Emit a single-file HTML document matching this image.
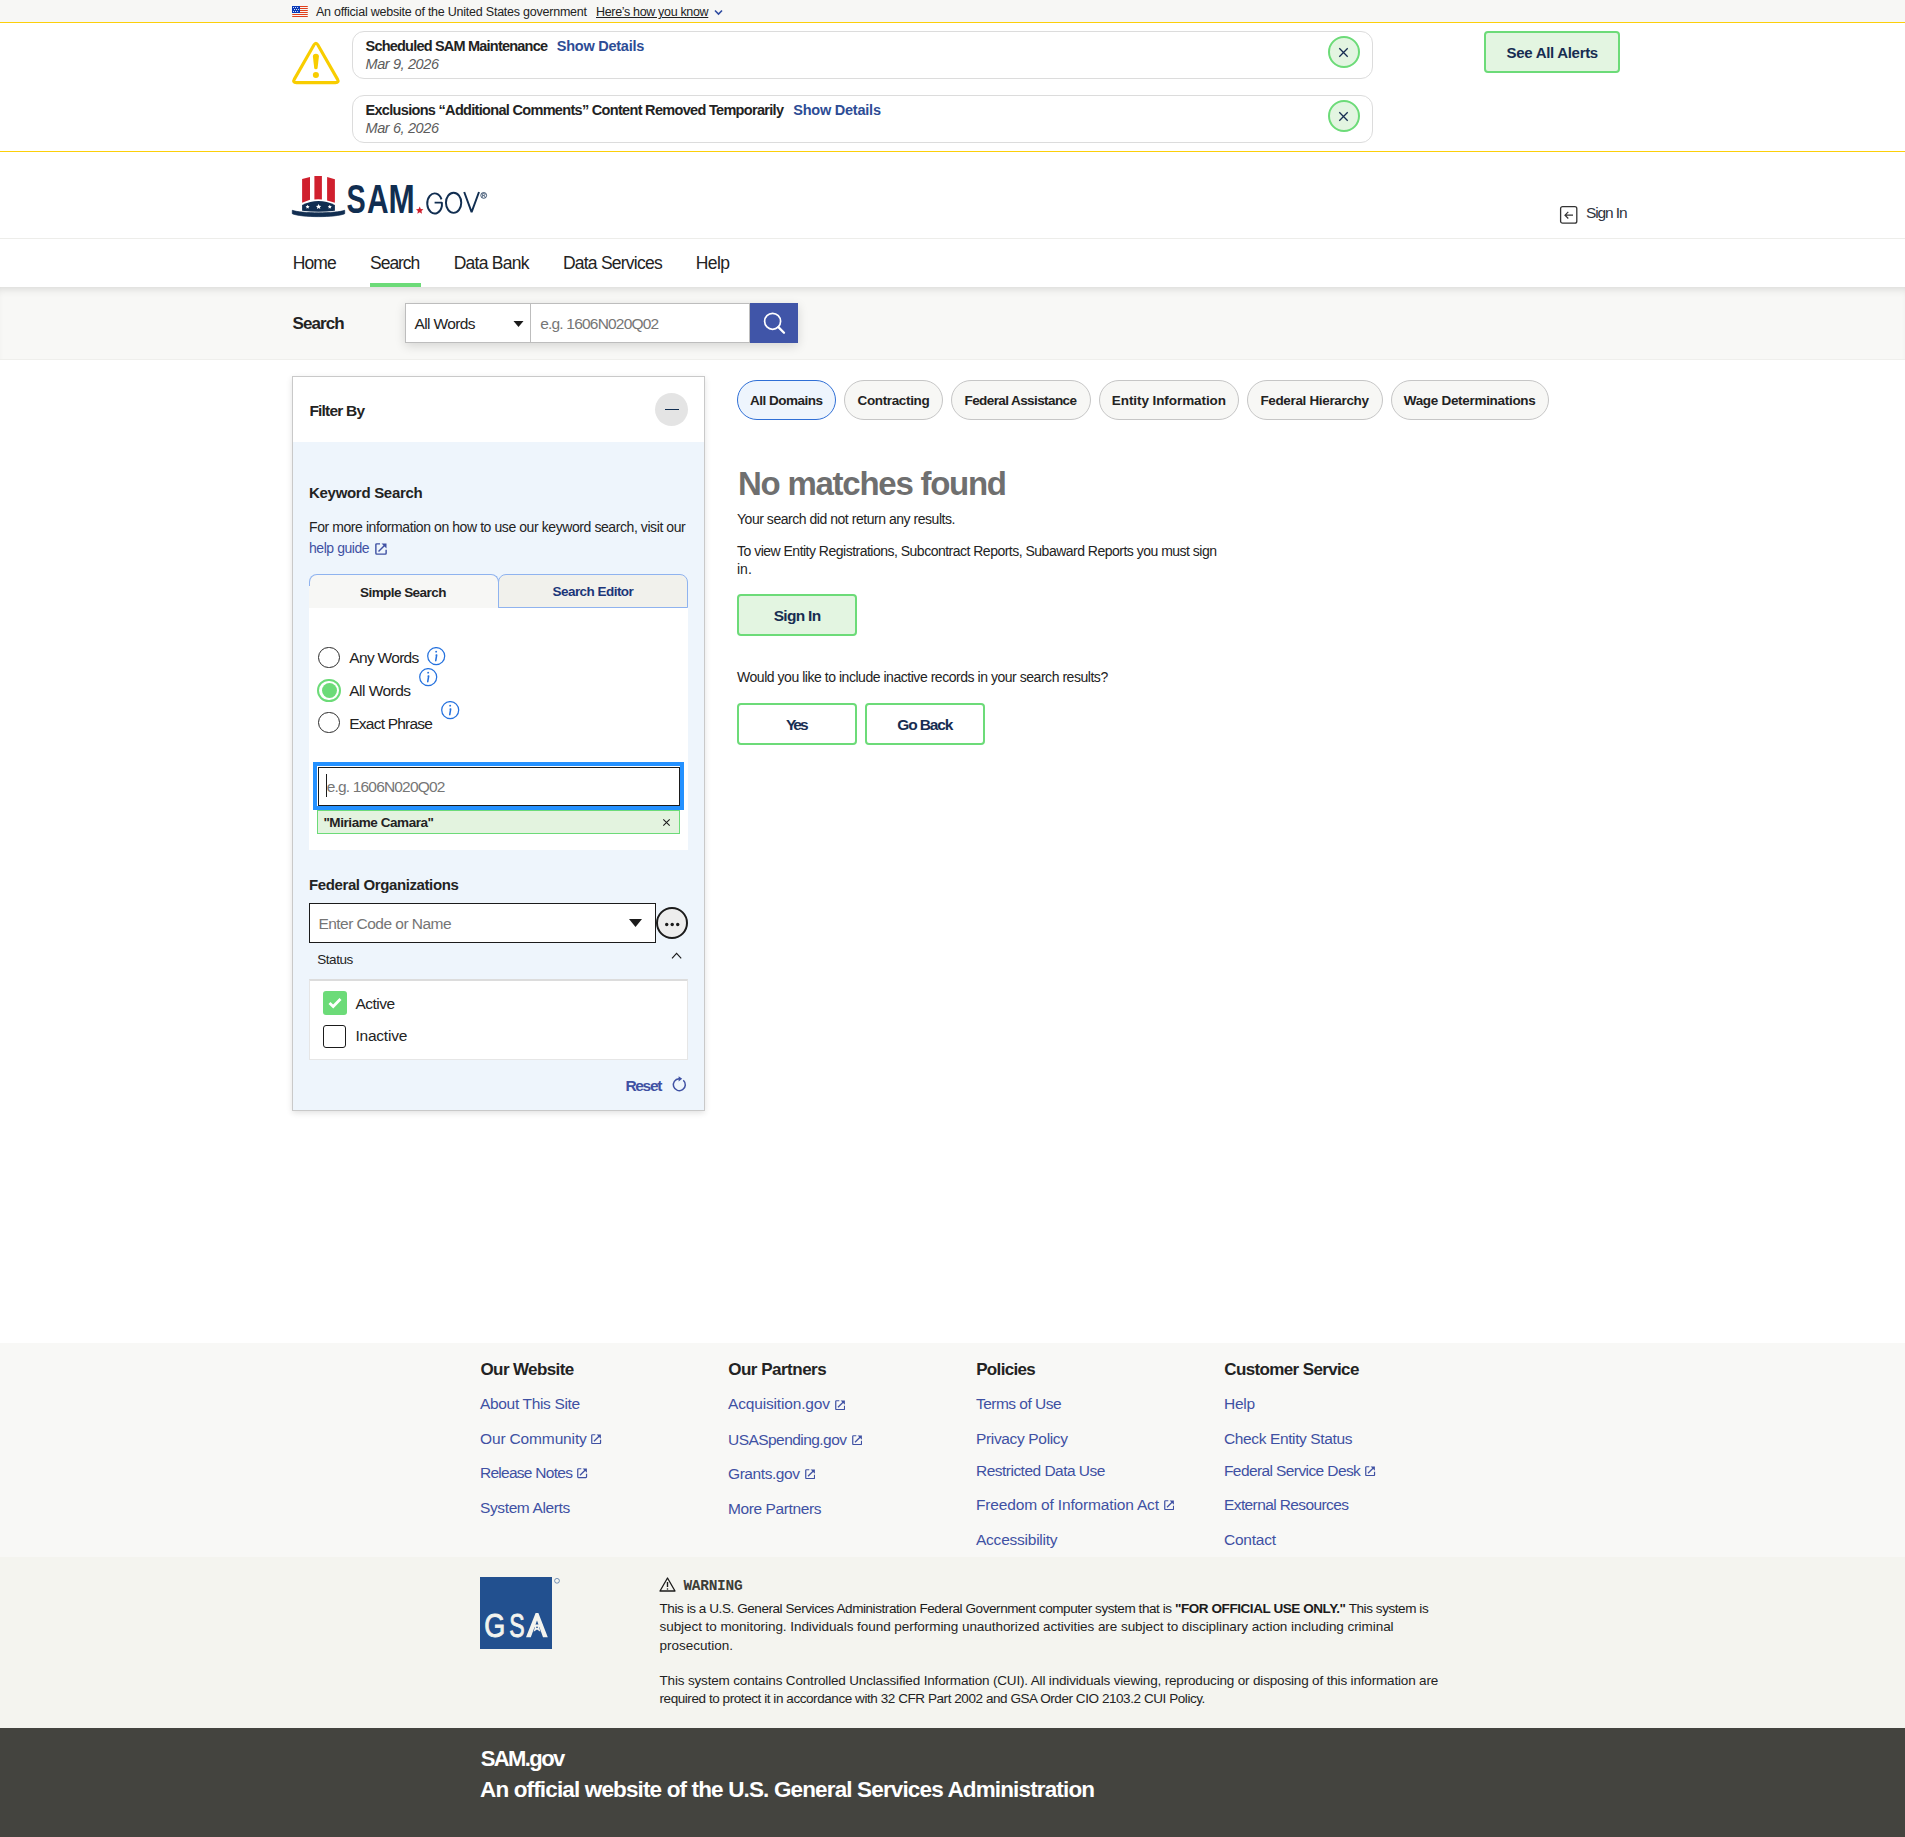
<!DOCTYPE html>
<html><head><meta charset="utf-8"><title>SAM.gov Search</title>
<style>
html,body{margin:0;padding:0;}
body{width:1905px;height:1837px;position:relative;overflow:hidden;background:#fff;font-family:"Liberation Sans",sans-serif;}
.a{position:absolute;}
.t{position:absolute;white-space:nowrap;}
</style></head><body>
<div class="a" style="left:0px;top:0px;width:1905px;height:22px;background:#f7f7f5"></div>
<div class="a" style="left:0px;top:22px;width:1905px;height:1px;background:#fccf0a"></div>
<div class="a" style="left:0px;top:151px;width:1905px;height:1px;background:#fccf0a"></div>
<div class="a" style="left:0px;top:238px;width:1905px;height:1px;background:#ededea"></div>
<div class="a" style="left:0px;top:287px;width:1905px;height:73px;background:#f8f8f6;border-bottom:1px solid #efefec;box-sizing:border-box;box-shadow:inset 0 7px 8px -5px rgba(0,0,0,0.13)"></div>
<div class="a" style="left:0px;top:1343px;width:1905px;height:214px;background:#f8f8f6"></div>
<div class="a" style="left:0px;top:1557px;width:1905px;height:171px;background:#f4f4ef"></div>
<div class="a" style="left:0px;top:1728px;width:1905px;height:109px;background:#44443f"></div>
<svg class="a" style="left:292px;top:6px" width="16" height="11" viewBox="0 0 16 11">
<g stroke="#e0401d" stroke-width="1" stroke-linecap="round"><path d="M0.6 0.5 H15.4 M0.6 2.5 H15.4 M0.6 4.5 H15.4 M0.6 6.5 H15.4 M0.6 8.5 H15.4 M0.6 10.5 H15.4"/></g>
<rect x="0" y="0" width="8" height="7" fill="#0a3ab8"/>
<g fill="#fff"><circle cx="1.5" cy="1.5" r=".55"/><circle cx="3.5" cy="1.5" r=".55"/><circle cx="5.6" cy="1.5" r=".55"/><circle cx="2.5" cy="3.5" r=".55"/><circle cx="4.5" cy="3.5" r=".55"/><circle cx="6.6" cy="3.5" r=".55"/><circle cx="1.5" cy="5.5" r=".55"/><circle cx="3.5" cy="5.5" r=".55"/><circle cx="5.6" cy="5.5" r=".55"/></g>
</svg>
<div class="t" style="left:316.00px;top:6.32px;font-size:12.5px;line-height:12.5px;font-family:'Liberation Sans', sans-serif;font-weight:normal;font-style:normal;letter-spacing:-0.231px;color:#232323;">An official website of the United States government</div>
<div class="t" style="left:596.00px;top:6.32px;font-size:12.5px;line-height:12.5px;font-family:'Liberation Sans', sans-serif;font-weight:normal;font-style:normal;letter-spacing:-0.332px;color:#232323;text-decoration:underline;text-underline-offset:1px">Here’s how you know</div>
<svg class="a" style="left:714px;top:9px" width="9" height="7" viewBox="0 0 9 7"><path d="M1 1.5 L4.5 5 L8 1.5" fill="none" stroke="#2e4ba0" stroke-width="1.6"/></svg>
<svg class="a" style="left:291px;top:41px" width="50" height="44" viewBox="0 0 50 44">
<path d="M22.91 3.97 Q24.90 0.50 26.89 3.97 L46.41 38.13 Q48.40 41.60 44.40 41.60 L5.40 41.60 Q1.40 41.60 3.39 38.13 Z" fill="none" stroke="#f8cd00" stroke-width="3.1" stroke-linejoin="round"/>
<path d="M21.9 15.6 Q21.9 12.8 24.9 12.8 Q27.9 12.8 27.9 15.6 L26.6 26.9 Q26.4 28.2 24.9 28.2 Q23.4 28.2 23.2 26.9 Z" fill="#f8cd00"/>
<circle cx="24.9" cy="34" r="3.05" fill="#f8cd00"/>
</svg>
<div class="a" style="left:352px;top:31px;width:1021px;height:48px;border:1px solid #dcdcdc;border-radius:12px;box-sizing:border-box;background:#fff"></div>
<div class="t" style="left:365.50px;top:39.23px;font-size:14.5px;line-height:14.5px;font-family:'Liberation Sans', sans-serif;font-weight:bold;font-style:normal;letter-spacing:-0.789px;color:#232323;">Scheduled SAM Maintenance</div>
<div class="t" style="left:556.80px;top:39.23px;font-size:14.5px;line-height:14.5px;font-family:'Liberation Sans', sans-serif;font-weight:bold;font-style:normal;letter-spacing:-0.249px;color:#2d4c95;">Show Details</div>
<div class="t" style="left:365.50px;top:57.33px;font-size:14.5px;line-height:14.5px;font-family:'Liberation Sans', sans-serif;font-weight:normal;font-style:italic;letter-spacing:-0.388px;color:#5c5c5c;">Mar 9, 2026</div>
<div class="a" style="left:1327.8px;top:36px;width:32px;height:32px;border:2.5px solid #6cdb78;background:#e3f5e1;border-radius:50%;box-sizing:border-box"></div>
<svg class="a" style="left:1337px;top:45.5px" width="13" height="13" viewBox="0 0 13 13"><path d="M2.3 2.3 L10.7 10.7 M10.7 2.3 L2.3 10.7" stroke="#172d52" stroke-width="1.3"/></svg>
<div class="a" style="left:352px;top:95px;width:1021px;height:48px;border:1px solid #dcdcdc;border-radius:12px;box-sizing:border-box;background:#fff"></div>
<div class="t" style="left:365.50px;top:103.13px;font-size:14.5px;line-height:14.5px;font-family:'Liberation Sans', sans-serif;font-weight:bold;font-style:normal;letter-spacing:-0.686px;color:#232323;">Exclusions “Additional Comments” Content Removed Temporarily</div>
<div class="t" style="left:793.20px;top:103.13px;font-size:14.5px;line-height:14.5px;font-family:'Liberation Sans', sans-serif;font-weight:bold;font-style:normal;letter-spacing:-0.222px;color:#2d4c95;">Show Details</div>
<div class="t" style="left:365.50px;top:120.93px;font-size:14.5px;line-height:14.5px;font-family:'Liberation Sans', sans-serif;font-weight:normal;font-style:italic;letter-spacing:-0.388px;color:#5c5c5c;">Mar 6, 2026</div>
<div class="a" style="left:1327.8px;top:100px;width:32px;height:32px;border:2.5px solid #6cdb78;background:#e3f5e1;border-radius:50%;box-sizing:border-box"></div>
<svg class="a" style="left:1337px;top:109.5px" width="13" height="13" viewBox="0 0 13 13"><path d="M2.3 2.3 L10.7 10.7 M10.7 2.3 L2.3 10.7" stroke="#172d52" stroke-width="1.3"/></svg>
<div class="a" style="left:1484px;top:31px;width:136px;height:42px;border:2.5px solid #6cdb78;background:#e3f5e1;border-radius:4px;box-sizing:border-box"></div>
<div class="t" style="left:1506.60px;top:45.00px;font-size:15px;line-height:15px;font-family:'Liberation Sans', sans-serif;font-weight:bold;font-style:normal;letter-spacing:-0.307px;color:#172d52;">See All Alerts</div>
<svg class="a" style="left:288px;top:170px" width="210" height="52" viewBox="288 170 210 52">
<path d="M302.1 179.1 L310 176.9 L310 199.7 L302.1 202.7 Z" fill="#d0202e"/>
<path d="M314.4 176 L321.9 176 L321.9 199.6 Q318.15 199 314.4 199.6 Z" fill="#d0202e"/>
<path d="M327.1 176.9 L334.9 179.2 L334.9 202.7 L327.1 200.4 Z" fill="#d0202e"/>
<path d="M302.1 205 Q318.5 197 334.9 205 L334.9 210.8 Q318.5 212.6 302.1 210.8 Z" fill="#112e51"/>
<path d="M292.3 210.3 C301 213.6 336 213.6 344.7 210.3 L344.7 213.7 C336 217.6 301 217.6 292.3 213.7 Z" fill="#112e51" stroke="#112e51" stroke-width="0.7" stroke-linejoin="round"/>
<g fill="#fff">
<path d="M307.6 204.8 l0.62 1.3 1.42 0.16 -1.05 0.95 0.3 1.4 -1.29 -0.73 -1.29 0.73 0.3 -1.4 -1.05 -0.95 1.42 -0.16z"/>
<path d="M318.6 204 l0.8 1.7 1.85 0.2 -1.37 1.25 0.39 1.82 -1.67 -0.95 -1.67 0.95 0.39 -1.82 -1.37 -1.25 1.85 -0.2z"/>
<path d="M329.8 204.8 l0.62 1.3 1.42 0.16 -1.05 0.95 0.3 1.4 -1.29 -0.73 -1.29 0.73 0.3 -1.4 -1.05 -0.95 1.42 -0.16z"/>
</g>
<g font-family="Liberation Sans" font-weight="bold" font-size="40.5" fill="#112e51">
<text x="346.6" y="213" textLength="19.2" lengthAdjust="spacingAndGlyphs">S</text>
<text x="366.9" y="213" textLength="21.6" lengthAdjust="spacingAndGlyphs">A</text>
<text x="388.6" y="213" textLength="26.2" lengthAdjust="spacingAndGlyphs">M</text>
</g>
<path d="M419.7 206.5 l1.1 2.45 2.65 0.3 -1.97 1.8 0.55 2.6 -2.33 -1.33 -2.33 1.33 0.55 -2.6 -1.97 -1.8 2.65 -0.3z" fill="#d0202e"/>
<g fill="none" stroke="#112e51" stroke-width="1.95" stroke-linejoin="bevel">
<path d="M441.5 199.4 A7.45 10.05 0 1 0 441.9 206 L441.9 202.6 L434.6 202.6"/>
<ellipse cx="453.6" cy="202.8" rx="7.65" ry="10.05"/>
<path d="M464.2 192 L471.6 212.2 L479 192"/>
</g>
<circle cx="483.7" cy="195.4" r="2.9" fill="none" stroke="#112e51" stroke-width="0.8"/>
<path d="M482.6 197.3 L482.6 193.6 L484 193.6 Q485 193.7 485 194.6 Q485 195.4 484 195.5 L482.6 195.5 M484 195.5 L485.1 197.3" fill="none" stroke="#112e51" stroke-width="0.6"/>
</svg>
<svg class="a" style="left:1559px;top:205px" width="20" height="20" viewBox="0 0 20 20">
<rect x="1.6" y="1.6" width="16.2" height="16.6" rx="2" fill="none" stroke="#333" stroke-width="1.3"/>
<path d="M14 10.2 L6 10.2 M9.3 6.9 L6 10.2 L9.3 13.5" fill="none" stroke="#333" stroke-width="1.2"/>
</svg>
<div class="t" style="left:1586.00px;top:204.68px;font-size:15.5px;line-height:15.5px;font-family:'Liberation Sans', sans-serif;font-weight:normal;font-style:normal;letter-spacing:-1.109px;color:#2e3440;">Sign In</div>
<div class="t" style="left:292.80px;top:255.39px;font-size:17.5px;line-height:17.5px;font-family:'Liberation Sans', sans-serif;font-weight:normal;font-style:normal;letter-spacing:-0.927px;color:#232323;">Home</div>
<div class="t" style="left:370.10px;top:255.39px;font-size:17.5px;line-height:17.5px;font-family:'Liberation Sans', sans-serif;font-weight:normal;font-style:normal;letter-spacing:-1.050px;color:#232323;">Search</div>
<div class="t" style="left:453.70px;top:255.39px;font-size:17.5px;line-height:17.5px;font-family:'Liberation Sans', sans-serif;font-weight:normal;font-style:normal;letter-spacing:-0.752px;color:#232323;">Data Bank</div>
<div class="t" style="left:562.90px;top:255.39px;font-size:17.5px;line-height:17.5px;font-family:'Liberation Sans', sans-serif;font-weight:normal;font-style:normal;letter-spacing:-0.761px;color:#232323;">Data Services</div>
<div class="t" style="left:695.80px;top:255.39px;font-size:17.5px;line-height:17.5px;font-family:'Liberation Sans', sans-serif;font-weight:normal;font-style:normal;letter-spacing:-0.564px;color:#232323;">Help</div>
<div class="a" style="left:370px;top:283px;width:51px;height:4px;background:#6cdb78"></div>
<div class="t" style="left:292.50px;top:314.81px;font-size:17px;line-height:17px;font-family:'Liberation Sans', sans-serif;font-weight:bold;font-style:normal;letter-spacing:-0.921px;color:#232323;">Search</div>
<div class="a" style="left:405px;top:303px;width:393px;height:40px;box-shadow:0 3px 10px rgba(0,0,0,0.14)"></div>
<div class="a" style="left:405px;top:303px;width:126px;height:40px;background:#fff;border:1px solid #bdbdbd;box-sizing:border-box"></div>
<div class="t" style="left:414.60px;top:315.88px;font-size:15.5px;line-height:15.5px;font-family:'Liberation Sans', sans-serif;font-weight:normal;font-style:normal;letter-spacing:-0.629px;color:#232323;">All Words</div>
<svg class="a" style="left:513px;top:320px" width="11" height="8" viewBox="0 0 11 8"><path d="M0.5 1 L10.5 1 L5.5 7 Z" fill="#1b1b1b"/></svg>
<div class="a" style="left:531px;top:303px;width:219px;height:40px;background:#fff;border:1px solid #bdbdbd;border-left:none;box-sizing:border-box"></div>
<div class="t" style="left:540.20px;top:315.88px;font-size:15.5px;line-height:15.5px;font-family:'Liberation Sans', sans-serif;font-weight:normal;font-style:normal;letter-spacing:-0.799px;color:#767676;">e.g. 1606N020Q02</div>
<div class="a" style="left:750px;top:303px;width:48px;height:40px;background:#4055a8"></div>
<svg class="a" style="left:750px;top:303px" width="48" height="40" viewBox="750 303 48 40"><circle cx="772.6" cy="321.3" r="8" fill="none" stroke="#fff" stroke-width="1.7"/><path d="M778.4 327.1 L784 332.8" stroke="#fff" stroke-width="2.3" stroke-linecap="round"/></svg>
<div class="a" style="left:292px;top:376px;width:413px;height:735px;border:1px solid #c9c9c9;box-sizing:border-box;background:#eef5fc;box-shadow:0 2px 6px rgba(0,0,0,0.12)"></div>
<div class="a" style="left:293px;top:377px;width:411px;height:65px;background:#fff"></div>
<div class="t" style="left:309.40px;top:403.18px;font-size:15.5px;line-height:15.5px;font-family:'Liberation Sans', sans-serif;font-weight:bold;font-style:normal;letter-spacing:-0.789px;color:#232323;">Filter By</div>
<div class="a" style="left:655px;top:393px;width:33px;height:33px;border-radius:50%;background:#e4e4e4"></div>
<div class="a" style="left:665px;top:408.5px;width:14px;height:1.5px;background:#112e51"></div>
<div class="t" style="left:309.00px;top:485.30px;font-size:15px;line-height:15px;font-family:'Liberation Sans', sans-serif;font-weight:bold;font-style:normal;letter-spacing:-0.296px;color:#232323;">Keyword Search</div>
<div class="t" style="left:309.00px;top:519.55px;font-size:14px;line-height:14px;font-family:'Liberation Sans', sans-serif;font-weight:normal;font-style:normal;letter-spacing:-0.418px;color:#232323;">For more information on how to use our keyword search, visit our</div>
<div class="t" style="left:309.00px;top:540.95px;font-size:14px;line-height:14px;font-family:'Liberation Sans', sans-serif;font-weight:normal;font-style:normal;letter-spacing:-0.446px;color:#3f51a3;">help guide</div>
<svg class="a" style="left:375px;top:543px" width="12" height="12" viewBox="0 0 11 11"><path d="M4.6 0.8 L1.6 0.8 Q0.8 0.8 0.8 1.6 L0.8 9.4 Q0.8 10.2 1.6 10.2 L9.4 10.2 Q10.2 10.2 10.2 9.4 L10.2 6.2" fill="none" stroke="#3f51a3" stroke-width="1.3"/><path d="M3.2 7.8 L9.4 1.6" stroke="#3f51a3" stroke-width="1.3"/><path d="M6.0 0.45 L10.55 0.45 L10.55 5.0 Z" fill="#3f51a3"/></svg>
<div class="a" style="left:309px;top:574px;width:190px;height:34px;background:#f7f7f5;border:1px solid #8fb3ef;border-bottom:none;border-radius:8px 8px 0 0;box-sizing:border-box"></div>
<div class="a" style="left:498px;top:574px;width:190px;height:34px;background:#f1f1ec;border:1px solid #8fb3ef;border-radius:8px 8px 0 0;box-sizing:border-box"></div>
<div class="a" style="left:310px;top:600px;width:188px;height:8px;background:#f7f7f5"></div>
<div class="a" style="left:309px;top:586px;width:1.1999999999999886px;height:22px;background:#f7f7f5"></div>
<div class="t" style="left:360.00px;top:586.47px;font-size:13.5px;line-height:13.5px;font-family:'Liberation Sans', sans-serif;font-weight:bold;font-style:normal;letter-spacing:-0.553px;color:#232323;">Simple Search</div>
<div class="t" style="left:552.50px;top:585.27px;font-size:13.5px;line-height:13.5px;font-family:'Liberation Sans', sans-serif;font-weight:bold;font-style:normal;letter-spacing:-0.540px;color:#1c3679;">Search Editor</div>
<div class="a" style="left:309px;top:608px;width:379px;height:242px;background:#fff"></div>
<div class="t" style="left:349.30px;top:650.18px;font-size:15.5px;line-height:15.5px;font-family:'Liberation Sans', sans-serif;font-weight:normal;font-style:normal;letter-spacing:-0.690px;color:#232323;">Any Words</div>
<svg class="a" style="left:427px;top:647.1px" width="19" height="19" viewBox="0 0 19 19"><circle cx="9.2" cy="9.1" r="8.5" fill="none" stroke="#2672de" stroke-width="1.25"/><circle cx="9.15" cy="4.65" r="0.95" fill="#2672de"/><path d="M9.65 8.1 L8.75 13.7" stroke="#2672de" stroke-width="1.55" stroke-linecap="round"/><path d="M8.4 8.1 L9.7 8.1" stroke="#2672de" stroke-width="0.9"/></svg>
<div class="t" style="left:349.30px;top:682.68px;font-size:15.5px;line-height:15.5px;font-family:'Liberation Sans', sans-serif;font-weight:normal;font-style:normal;letter-spacing:-0.542px;color:#232323;">All Words</div>
<svg class="a" style="left:419px;top:668.1px" width="19" height="19" viewBox="0 0 19 19"><circle cx="9.2" cy="9.1" r="8.5" fill="none" stroke="#2672de" stroke-width="1.25"/><circle cx="9.15" cy="4.65" r="0.95" fill="#2672de"/><path d="M9.65 8.1 L8.75 13.7" stroke="#2672de" stroke-width="1.55" stroke-linecap="round"/><path d="M8.4 8.1 L9.7 8.1" stroke="#2672de" stroke-width="0.9"/></svg>
<div class="t" style="left:349.30px;top:715.98px;font-size:15.5px;line-height:15.5px;font-family:'Liberation Sans', sans-serif;font-weight:normal;font-style:normal;letter-spacing:-0.780px;color:#232323;">Exact Phrase</div>
<svg class="a" style="left:441px;top:701.1px" width="19" height="19" viewBox="0 0 19 19"><circle cx="9.2" cy="9.1" r="8.5" fill="none" stroke="#2672de" stroke-width="1.25"/><circle cx="9.15" cy="4.65" r="0.95" fill="#2672de"/><path d="M9.65 8.1 L8.75 13.7" stroke="#2672de" stroke-width="1.55" stroke-linecap="round"/><path d="M8.4 8.1 L9.7 8.1" stroke="#2672de" stroke-width="0.9"/></svg>
<div class="a" style="left:318px;top:646.6px;width:21.5px;height:21.5px;border:1.8px solid #2b2b2b;border-radius:50%;box-sizing:border-box;background:#fff"></div>
<div class="a" style="left:317.3px;top:679px;width:23.4px;height:23.4px;border:2.2px solid #6cdb78;border-radius:50%;box-sizing:border-box;background:#fff"></div>
<div class="a" style="left:321.5px;top:683.2px;width:15px;height:15px;border-radius:50%;background:#6cdb78"></div>
<div class="a" style="left:318px;top:711.6px;width:21.5px;height:21.5px;border:1.8px solid #2b2b2b;border-radius:50%;box-sizing:border-box;background:#fff"></div>
<div class="a" style="left:313px;top:762px;width:371px;height:48px;border:4.5px solid #2491ff;box-sizing:border-box;background:#fff"></div>
<div class="a" style="left:317.5px;top:766.5px;width:362.0px;height:39.0px;border:1.6px solid #1b1b1b;box-sizing:border-box;background:#fff"></div>
<div class="a" style="left:326px;top:774px;width:1.3000000000000114px;height:23px;background:#1b1b1b"></div>
<div class="t" style="left:326.80px;top:778.88px;font-size:15.5px;line-height:15.5px;font-family:'Liberation Sans', sans-serif;font-weight:normal;font-style:normal;letter-spacing:-0.833px;color:#767676;">e.g. 1606N020Q02</div>
<div class="a" style="left:317px;top:810px;width:363px;height:24px;border:1px solid #6cdb78;background:#e3f3df;box-sizing:border-box"></div>
<div class="t" style="left:323.40px;top:815.57px;font-size:13.5px;line-height:13.5px;font-family:'Liberation Sans', sans-serif;font-weight:bold;font-style:normal;letter-spacing:-0.433px;color:#232323;">"Miriame Camara"</div>
<svg class="a" style="left:662px;top:818px" width="9" height="9" viewBox="0 0 9 9"><path d="M1.3 1.3 L7.7 7.7 M7.7 1.3 L1.3 7.7" stroke="#1b1b1b" stroke-width="1.05"/></svg>
<div class="t" style="left:309.00px;top:877.30px;font-size:15px;line-height:15px;font-family:'Liberation Sans', sans-serif;font-weight:bold;font-style:normal;letter-spacing:-0.387px;color:#232323;">Federal Organizations</div>
<div class="a" style="left:309px;top:903px;width:347px;height:40px;border:1.6px solid #1b1b1b;box-sizing:border-box;background:#fff"></div>
<div class="t" style="left:318.40px;top:915.68px;font-size:15.5px;line-height:15.5px;font-family:'Liberation Sans', sans-serif;font-weight:normal;font-style:normal;letter-spacing:-0.526px;color:#757575;">Enter Code or Name</div>
<svg class="a" style="left:628px;top:918px" width="15" height="10" viewBox="0 0 15 10"><path d="M1 1 L14 1 L7.5 9 Z" fill="#1b1b1b"/></svg>
<div class="a" style="left:656px;top:907px;width:32px;height:32px;border:2px solid #1b1b1b;border-radius:50%;box-sizing:border-box;background:#ededed"></div>
<svg class="a" style="left:664px;top:922px" width="16" height="5" viewBox="0 0 16 5"><circle cx="2.7" cy="2.5" r="1.7" fill="#1b1b1b"/><circle cx="8.2" cy="2.5" r="1.7" fill="#1b1b1b"/><circle cx="13.7" cy="2.5" r="1.7" fill="#1b1b1b"/></svg>
<div class="t" style="left:317.30px;top:953.37px;font-size:13.5px;line-height:13.5px;font-family:'Liberation Sans', sans-serif;font-weight:normal;font-style:normal;letter-spacing:-0.474px;color:#232323;">Status</div>
<svg class="a" style="left:670px;top:951px" width="13" height="9" viewBox="0 0 13 9"><path d="M2 7.3 L6.6 2.4 L11.2 7.3" fill="none" stroke="#1b1b1b" stroke-width="1.15"/></svg>
<div class="a" style="left:309px;top:979px;width:379px;height:81px;background:#fff;border:1px solid #e6e6e6;border-top:2px solid #dcdcdc;box-sizing:border-box"></div>
<div class="a" style="left:323px;top:991px;width:24px;height:24px;border-radius:3px;background:#6cdb78"></div>
<svg class="a" style="left:326px;top:995px" width="18" height="16" viewBox="0 0 18 16"><path d="M3.5 8 L7.2 11.5 L14.5 4" fill="none" stroke="#fff" stroke-width="2.8"/></svg>
<div class="t" style="left:355.40px;top:995.88px;font-size:15.5px;line-height:15.5px;font-family:'Liberation Sans', sans-serif;font-weight:normal;font-style:normal;letter-spacing:-0.482px;color:#232323;">Active</div>
<div class="a" style="left:323px;top:1025px;width:23px;height:22.5px;border-radius:3px;border:1.8px solid #1b1b1b;box-sizing:border-box;background:#fff"></div>
<div class="t" style="left:355.40px;top:1027.88px;font-size:15.5px;line-height:15.5px;font-family:'Liberation Sans', sans-serif;font-weight:normal;font-style:normal;letter-spacing:-0.217px;color:#232323;">Inactive</div>
<div class="t" style="left:625.40px;top:1077.58px;font-size:15.5px;line-height:15.5px;font-family:'Liberation Sans', sans-serif;font-weight:bold;font-style:normal;letter-spacing:-1.304px;color:#3f51a3;">Reset</div>
<svg class="a" style="left:671px;top:1075px" width="17" height="18" viewBox="0 0 17 18"><path d="M12.3 5.2 A6 6 0 1 1 8 3.7" fill="none" stroke="#3f51a3" stroke-width="1.5"/><path d="M7.6 1.2 L11.2 3.8 L7.6 6.4 Z" fill="#3f51a3"/></svg>
<div class="a" style="left:737px;top:380px;width:99px;height:40px;border:1.6px solid #2f6fd6;background:#eef5fd;border-radius:20px;box-sizing:border-box"></div>
<div class="t" style="left:750.00px;top:393.97px;font-size:13.5px;line-height:13.5px;font-family:'Liberation Sans', sans-serif;font-weight:bold;font-style:normal;letter-spacing:-0.511px;color:#232323;">All Domains</div>
<div class="a" style="left:844px;top:380px;width:99px;height:40px;border:1px solid #c6c6c6;background:#f7f7f5;border-radius:20px;box-sizing:border-box"></div>
<div class="t" style="left:857.50px;top:393.97px;font-size:13.5px;line-height:13.5px;font-family:'Liberation Sans', sans-serif;font-weight:bold;font-style:normal;letter-spacing:-0.355px;color:#232323;">Contracting</div>
<div class="a" style="left:951px;top:380px;width:140px;height:40px;border:1px solid #c6c6c6;background:#f7f7f5;border-radius:20px;box-sizing:border-box"></div>
<div class="t" style="left:964.50px;top:393.97px;font-size:13.5px;line-height:13.5px;font-family:'Liberation Sans', sans-serif;font-weight:bold;font-style:normal;letter-spacing:-0.592px;color:#232323;">Federal Assistance</div>
<div class="a" style="left:1099px;top:380px;width:140px;height:40px;border:1px solid #c6c6c6;background:#f7f7f5;border-radius:20px;box-sizing:border-box"></div>
<div class="t" style="left:1111.80px;top:393.97px;font-size:13.5px;line-height:13.5px;font-family:'Liberation Sans', sans-serif;font-weight:bold;font-style:normal;letter-spacing:-0.076px;color:#232323;">Entity Information</div>
<div class="a" style="left:1247px;top:380px;width:136px;height:40px;border:1px solid #c6c6c6;background:#f7f7f5;border-radius:20px;box-sizing:border-box"></div>
<div class="t" style="left:1260.40px;top:393.97px;font-size:13.5px;line-height:13.5px;font-family:'Liberation Sans', sans-serif;font-weight:bold;font-style:normal;letter-spacing:-0.341px;color:#232323;">Federal Hierarchy</div>
<div class="a" style="left:1391px;top:380px;width:158px;height:40px;border:1px solid #c6c6c6;background:#f7f7f5;border-radius:20px;box-sizing:border-box"></div>
<div class="t" style="left:1403.70px;top:393.97px;font-size:13.5px;line-height:13.5px;font-family:'Liberation Sans', sans-serif;font-weight:bold;font-style:normal;letter-spacing:-0.301px;color:#232323;">Wage Determinations</div>
<div class="t" style="left:738.00px;top:467.27px;font-size:33px;line-height:33px;font-family:'Liberation Sans', sans-serif;font-weight:bold;font-style:normal;letter-spacing:-1.257px;color:#6f6f6f;">No matches found</div>
<div class="t" style="left:737.00px;top:511.65px;font-size:14px;line-height:14px;font-family:'Liberation Sans', sans-serif;font-weight:normal;font-style:normal;letter-spacing:-0.465px;color:#232323;">Your search did not return any results.</div>
<div class="t" style="left:737.00px;top:543.95px;font-size:14px;line-height:14px;font-family:'Liberation Sans', sans-serif;font-weight:normal;font-style:normal;letter-spacing:-0.507px;color:#232323;">To view Entity Registrations, Subcontract Reports, Subaward Reports you must sign</div>
<div class="t" style="left:737.00px;top:561.55px;font-size:14px;line-height:14px;font-family:'Liberation Sans', sans-serif;font-weight:normal;font-style:normal;letter-spacing:0.000px;color:#232323;">in.</div>
<div class="a" style="left:737px;top:594px;width:120px;height:42px;border:2.5px solid #6cdb78;background:#e3f5e1;border-radius:4px;box-sizing:border-box"></div>
<div class="t" style="left:773.70px;top:607.88px;font-size:15.5px;line-height:15.5px;font-family:'Liberation Sans', sans-serif;font-weight:bold;font-style:normal;letter-spacing:-0.694px;color:#172d52;">Sign In</div>
<div class="t" style="left:737.00px;top:670.05px;font-size:14px;line-height:14px;font-family:'Liberation Sans', sans-serif;font-weight:normal;font-style:normal;letter-spacing:-0.463px;color:#232323;">Would you like to include inactive records in your search results?</div>
<div class="a" style="left:737px;top:703px;width:120px;height:42px;border:2.5px solid #6cdb78;background:#fff;border-radius:4px;box-sizing:border-box"></div>
<div class="t" style="left:785.90px;top:716.68px;font-size:15.5px;line-height:15.5px;font-family:'Liberation Sans', sans-serif;font-weight:bold;font-style:normal;letter-spacing:-2.012px;color:#172d52;">Yes</div>
<div class="a" style="left:865px;top:703px;width:120px;height:42px;border:2.5px solid #6cdb78;background:#fff;border-radius:4px;box-sizing:border-box"></div>
<div class="t" style="left:897.30px;top:716.68px;font-size:15.5px;line-height:15.5px;font-family:'Liberation Sans', sans-serif;font-weight:bold;font-style:normal;letter-spacing:-1.148px;color:#172d52;">Go Back</div>
<div class="t" style="left:480.50px;top:1360.51px;font-size:17px;line-height:17px;font-family:'Liberation Sans', sans-serif;font-weight:bold;font-style:normal;letter-spacing:-0.612px;color:#232323;">Our Website</div>
<div class="t" style="left:728.20px;top:1360.51px;font-size:17px;line-height:17px;font-family:'Liberation Sans', sans-serif;font-weight:bold;font-style:normal;letter-spacing:-0.493px;color:#232323;">Our Partners</div>
<div class="t" style="left:976.20px;top:1360.51px;font-size:17px;line-height:17px;font-family:'Liberation Sans', sans-serif;font-weight:bold;font-style:normal;letter-spacing:-0.665px;color:#232323;">Policies</div>
<div class="t" style="left:1224.30px;top:1360.51px;font-size:17px;line-height:17px;font-family:'Liberation Sans', sans-serif;font-weight:bold;font-style:normal;letter-spacing:-0.631px;color:#232323;">Customer Service</div>
<div class="t" style="left:480.00px;top:1396.48px;font-size:15.5px;line-height:15.5px;font-family:'Liberation Sans', sans-serif;font-weight:normal;font-style:normal;letter-spacing:-0.331px;color:#3f51a3;">About This Site</div>
<div class="t" style="left:480.00px;top:1430.58px;font-size:15.5px;line-height:15.5px;font-family:'Liberation Sans', sans-serif;font-weight:normal;font-style:normal;letter-spacing:-0.143px;color:#3f51a3;">Our Community</div>
<svg class="a" style="left:591.3px;top:1433.8px" width="10.3" height="10.3" viewBox="0 0 11 11"><path d="M4.6 0.8 L1.6 0.8 Q0.8 0.8 0.8 1.6 L0.8 9.4 Q0.8 10.2 1.6 10.2 L9.4 10.2 Q10.2 10.2 10.2 9.4 L10.2 6.2" fill="none" stroke="#3f51a3" stroke-width="1.3"/><path d="M3.2 7.8 L9.4 1.6" stroke="#3f51a3" stroke-width="1.3"/><path d="M6.0 0.45 L10.55 0.45 L10.55 5.0 Z" fill="#3f51a3"/></svg>
<div class="t" style="left:480.00px;top:1465.18px;font-size:15.5px;line-height:15.5px;font-family:'Liberation Sans', sans-serif;font-weight:normal;font-style:normal;letter-spacing:-0.730px;color:#3f51a3;">Release Notes</div>
<svg class="a" style="left:577.4px;top:1468.3999999999999px" width="10.3" height="10.3" viewBox="0 0 11 11"><path d="M4.6 0.8 L1.6 0.8 Q0.8 0.8 0.8 1.6 L0.8 9.4 Q0.8 10.2 1.6 10.2 L9.4 10.2 Q10.2 10.2 10.2 9.4 L10.2 6.2" fill="none" stroke="#3f51a3" stroke-width="1.3"/><path d="M3.2 7.8 L9.4 1.6" stroke="#3f51a3" stroke-width="1.3"/><path d="M6.0 0.45 L10.55 0.45 L10.55 5.0 Z" fill="#3f51a3"/></svg>
<div class="t" style="left:480.00px;top:1500.08px;font-size:15.5px;line-height:15.5px;font-family:'Liberation Sans', sans-serif;font-weight:normal;font-style:normal;letter-spacing:-0.379px;color:#3f51a3;">System Alerts</div>
<div class="t" style="left:728.00px;top:1396.48px;font-size:15.5px;line-height:15.5px;font-family:'Liberation Sans', sans-serif;font-weight:normal;font-style:normal;letter-spacing:-0.161px;color:#3f51a3;">Acquisition.gov</div>
<svg class="a" style="left:834.5px;top:1399.6999999999998px" width="10.3" height="10.3" viewBox="0 0 11 11"><path d="M4.6 0.8 L1.6 0.8 Q0.8 0.8 0.8 1.6 L0.8 9.4 Q0.8 10.2 1.6 10.2 L9.4 10.2 Q10.2 10.2 10.2 9.4 L10.2 6.2" fill="none" stroke="#3f51a3" stroke-width="1.3"/><path d="M3.2 7.8 L9.4 1.6" stroke="#3f51a3" stroke-width="1.3"/><path d="M6.0 0.45 L10.55 0.45 L10.55 5.0 Z" fill="#3f51a3"/></svg>
<div class="t" style="left:728.00px;top:1431.88px;font-size:15.5px;line-height:15.5px;font-family:'Liberation Sans', sans-serif;font-weight:normal;font-style:normal;letter-spacing:-0.548px;color:#3f51a3;">USASpending.gov</div>
<svg class="a" style="left:851.5px;top:1435.1px" width="10.3" height="10.3" viewBox="0 0 11 11"><path d="M4.6 0.8 L1.6 0.8 Q0.8 0.8 0.8 1.6 L0.8 9.4 Q0.8 10.2 1.6 10.2 L9.4 10.2 Q10.2 10.2 10.2 9.4 L10.2 6.2" fill="none" stroke="#3f51a3" stroke-width="1.3"/><path d="M3.2 7.8 L9.4 1.6" stroke="#3f51a3" stroke-width="1.3"/><path d="M6.0 0.45 L10.55 0.45 L10.55 5.0 Z" fill="#3f51a3"/></svg>
<div class="t" style="left:728.00px;top:1465.88px;font-size:15.5px;line-height:15.5px;font-family:'Liberation Sans', sans-serif;font-weight:normal;font-style:normal;letter-spacing:-0.423px;color:#3f51a3;">Grants.gov</div>
<svg class="a" style="left:804.5px;top:1469.1px" width="10.3" height="10.3" viewBox="0 0 11 11"><path d="M4.6 0.8 L1.6 0.8 Q0.8 0.8 0.8 1.6 L0.8 9.4 Q0.8 10.2 1.6 10.2 L9.4 10.2 Q10.2 10.2 10.2 9.4 L10.2 6.2" fill="none" stroke="#3f51a3" stroke-width="1.3"/><path d="M3.2 7.8 L9.4 1.6" stroke="#3f51a3" stroke-width="1.3"/><path d="M6.0 0.45 L10.55 0.45 L10.55 5.0 Z" fill="#3f51a3"/></svg>
<div class="t" style="left:728.00px;top:1500.88px;font-size:15.5px;line-height:15.5px;font-family:'Liberation Sans', sans-serif;font-weight:normal;font-style:normal;letter-spacing:-0.400px;color:#3f51a3;">More Partners</div>
<div class="t" style="left:976.00px;top:1396.38px;font-size:15.5px;line-height:15.5px;font-family:'Liberation Sans', sans-serif;font-weight:normal;font-style:normal;letter-spacing:-0.527px;color:#3f51a3;">Terms of Use</div>
<div class="t" style="left:976.00px;top:1430.58px;font-size:15.5px;line-height:15.5px;font-family:'Liberation Sans', sans-serif;font-weight:normal;font-style:normal;letter-spacing:-0.344px;color:#3f51a3;">Privacy Policy</div>
<div class="t" style="left:976.00px;top:1462.88px;font-size:15.5px;line-height:15.5px;font-family:'Liberation Sans', sans-serif;font-weight:normal;font-style:normal;letter-spacing:-0.516px;color:#3f51a3;">Restricted Data Use</div>
<div class="t" style="left:976.00px;top:1496.88px;font-size:15.5px;line-height:15.5px;font-family:'Liberation Sans', sans-serif;font-weight:normal;font-style:normal;letter-spacing:-0.158px;color:#3f51a3;">Freedom of Information Act</div>
<svg class="a" style="left:1163.5px;top:1500.1px" width="10.3" height="10.3" viewBox="0 0 11 11"><path d="M4.6 0.8 L1.6 0.8 Q0.8 0.8 0.8 1.6 L0.8 9.4 Q0.8 10.2 1.6 10.2 L9.4 10.2 Q10.2 10.2 10.2 9.4 L10.2 6.2" fill="none" stroke="#3f51a3" stroke-width="1.3"/><path d="M3.2 7.8 L9.4 1.6" stroke="#3f51a3" stroke-width="1.3"/><path d="M6.0 0.45 L10.55 0.45 L10.55 5.0 Z" fill="#3f51a3"/></svg>
<div class="t" style="left:976.00px;top:1531.58px;font-size:15.5px;line-height:15.5px;font-family:'Liberation Sans', sans-serif;font-weight:normal;font-style:normal;letter-spacing:-0.234px;color:#3f51a3;">Accessibility</div>
<div class="t" style="left:1224.00px;top:1396.38px;font-size:15.5px;line-height:15.5px;font-family:'Liberation Sans', sans-serif;font-weight:normal;font-style:normal;letter-spacing:-0.293px;color:#3f51a3;">Help</div>
<div class="t" style="left:1224.00px;top:1430.58px;font-size:15.5px;line-height:15.5px;font-family:'Liberation Sans', sans-serif;font-weight:normal;font-style:normal;letter-spacing:-0.381px;color:#3f51a3;">Check Entity Status</div>
<div class="t" style="left:1224.00px;top:1462.88px;font-size:15.5px;line-height:15.5px;font-family:'Liberation Sans', sans-serif;font-weight:normal;font-style:normal;letter-spacing:-0.598px;color:#3f51a3;">Federal Service Desk</div>
<svg class="a" style="left:1365.3px;top:1466.1px" width="10.3" height="10.3" viewBox="0 0 11 11"><path d="M4.6 0.8 L1.6 0.8 Q0.8 0.8 0.8 1.6 L0.8 9.4 Q0.8 10.2 1.6 10.2 L9.4 10.2 Q10.2 10.2 10.2 9.4 L10.2 6.2" fill="none" stroke="#3f51a3" stroke-width="1.3"/><path d="M3.2 7.8 L9.4 1.6" stroke="#3f51a3" stroke-width="1.3"/><path d="M6.0 0.45 L10.55 0.45 L10.55 5.0 Z" fill="#3f51a3"/></svg>
<div class="t" style="left:1224.00px;top:1496.88px;font-size:15.5px;line-height:15.5px;font-family:'Liberation Sans', sans-serif;font-weight:normal;font-style:normal;letter-spacing:-0.603px;color:#3f51a3;">External Resources</div>
<div class="t" style="left:1224.00px;top:1531.58px;font-size:15.5px;line-height:15.5px;font-family:'Liberation Sans', sans-serif;font-weight:normal;font-style:normal;letter-spacing:-0.236px;color:#3f51a3;">Contact</div>
<svg class="a" style="left:480px;top:1577px" width="82" height="72" viewBox="480 1577 82 72">
<rect x="480" y="1577" width="72" height="72" fill="#22508f"/>
<g font-family="Liberation Sans" font-size="33.5" fill="#f3f3ee" stroke="#f3f3ee" stroke-width="0.9">
<text x="484.2" y="1637.2" textLength="21" lengthAdjust="spacingAndGlyphs">G</text>
<text x="509.2" y="1637.2" textLength="15.4" lengthAdjust="spacingAndGlyphs">S</text>
</g>
<path d="M526 1637.3 L535.6 1613 L538.4 1613 L547.8 1637.3 L543 1637.3 L537 1620.5 L530.8 1637.3 Z" fill="#f3f3ee"/>
<path d="M531.6 1624.6 L542.6 1624.6 L539.2 1627.6 L540.4 1631.8 L537 1629.4 L533.6 1631.8 L534.8 1627.6 Z" fill="#f3f3ee"/>
<path d="M537 1626 L538 1628.1 L536 1628.1 Z" fill="#22508f"/>
<circle cx="557" cy="1580.8" r="2.4" fill="none" stroke="#22508f" stroke-width="0.6"/>
</svg>
<svg class="a" style="left:659px;top:1577px" width="17" height="15" viewBox="0 0 17 15"><path d="M8.5 1 L16 14 L1 14 Z" fill="none" stroke="#1b1b1b" stroke-width="1.3" stroke-linejoin="round"/><path d="M8.5 5 L8.5 10" stroke="#1b1b1b" stroke-width="1.4"/><circle cx="8.5" cy="12" r=".8" fill="#1b1b1b"/></svg>
<div class="t" style="left:683.40px;top:1578.93px;font-size:14.5px;line-height:14.5px;font-family:'Liberation Mono', monospace;font-weight:bold;font-style:normal;letter-spacing:-0.285px;color:#3d3d38;">WARNING</div>
<div class="t" style="left:659.50px;top:1602.47px;font-size:13.5px;line-height:13.5px;font-family:'Liberation Sans', sans-serif;font-weight:normal;font-style:normal;letter-spacing:-0.425px;color:#1b1b1b;">This is a U.S. General Services Administration Federal Government computer system that is <span style="font-weight:bold">"FOR OFFICIAL USE ONLY."</span> This system is</div>
<div class="t" style="left:659.50px;top:1620.27px;font-size:13.5px;line-height:13.5px;font-family:'Liberation Sans', sans-serif;font-weight:normal;font-style:normal;letter-spacing:-0.057px;color:#232323;">subject to monitoring. Individuals found performing unauthorized activities are subject to disciplinary action including criminal</div>
<div class="t" style="left:659.50px;top:1638.57px;font-size:13.5px;line-height:13.5px;font-family:'Liberation Sans', sans-serif;font-weight:normal;font-style:normal;letter-spacing:0.000px;color:#232323;">prosecution.</div>
<div class="t" style="left:659.50px;top:1674.17px;font-size:13.5px;line-height:13.5px;font-family:'Liberation Sans', sans-serif;font-weight:normal;font-style:normal;letter-spacing:-0.166px;color:#232323;">This system contains Controlled Unclassified Information (CUI). All individuals viewing, reproducing or disposing of this information are</div>
<div class="t" style="left:659.50px;top:1692.27px;font-size:13.5px;line-height:13.5px;font-family:'Liberation Sans', sans-serif;font-weight:normal;font-style:normal;letter-spacing:-0.433px;color:#232323;">required to protect it in accordance with 32 CFR Part 2002 and GSA Order CIO 2103.2 CUI Policy.</div>
<div class="t" style="left:480.70px;top:1748.08px;font-size:22px;line-height:22px;font-family:'Liberation Sans', sans-serif;font-weight:bold;font-style:normal;letter-spacing:-1.586px;color:#ffffff;">SAM.gov</div>
<div class="t" style="left:480.00px;top:1779.45px;font-size:22.5px;line-height:22.5px;font-family:'Liberation Sans', sans-serif;font-weight:bold;font-style:normal;letter-spacing:-0.856px;color:#ffffff;">An official website of the U.S. General Services Administration</div>
</body></html>
